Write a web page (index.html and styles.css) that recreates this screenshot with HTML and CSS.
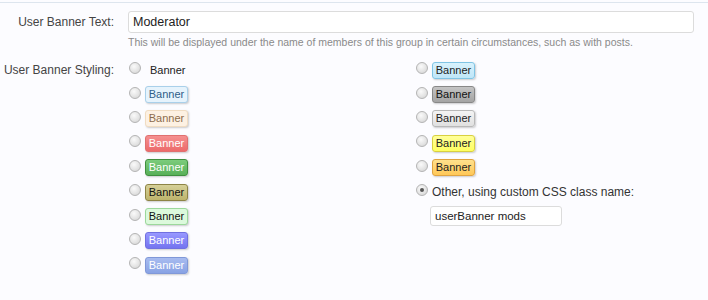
FILE: index.html
```html
<!DOCTYPE html>
<html lang="en">
  <head>
    <meta charset="UTF-8" />
    <title>User Banner</title>
    <link rel="stylesheet" href="styles.css">
  </head>
  <body>
    <div class="panel">
      <div class="ctrl-unit">
        <label class="ctrl-label" for="banner_text">User Banner Text:</label>
        <div class="ctrl-input">
          <input id="banner_text" class="textbox" type="text" value="Moderator" />
          <p class="explain">This will be displayed under the name of members of this group in certain circumstances, such as with posts.</p>
        </div>
      </div>

      <div class="ctrl-unit styling">
        <span class="ctrl-label">User Banner Styling:</span>
        <div class="choices">
          <ul class="choice-col">
            <li><span class="radio"></span><span class="plain">Banner</span></li>
            <li><span class="radio"></span><span class="banner b-lightblue">Banner</span></li>
            <li><span class="radio"></span><span class="banner b-cream">Banner</span></li>
            <li><span class="radio"></span><span class="banner b-red">Banner</span></li>
            <li><span class="radio"></span><span class="banner b-green">Banner</span></li>
            <li><span class="radio"></span><span class="banner b-olive">Banner</span></li>
            <li><span class="radio"></span><span class="banner b-lightgreen">Banner</span></li>
            <li><span class="radio"></span><span class="banner b-royal">Banner</span></li>
            <li><span class="radio"></span><span class="banner b-steel">Banner</span></li>
          </ul>
          <ul class="choice-col">
            <li><span class="radio"></span><span class="banner b-sky">Banner</span></li>
            <li><span class="radio"></span><span class="banner b-gray">Banner</span></li>
            <li><span class="radio"></span><span class="banner b-silver">Banner</span></li>
            <li><span class="radio"></span><span class="banner b-yellow">Banner</span></li>
            <li><span class="radio"></span><span class="banner b-orange">Banner</span></li>
            <li><span class="radio checked"></span><span class="other">Other, using custom CSS class name:</span></li>
            <li class="custom"><input class="textbox small" type="text" value="userBanner mods" /></li>
          </ul>
        </div>
      </div>
    </div>
  </body>
</html>
```

FILE: styles.css
```css
body {
  margin: 0;
  background: #fcfcff;
  font-family: "Liberation Sans", Arial, sans-serif;
  font-size: 12px;
  color: #333;
}
.panel {
  border-top: 1px solid #dde5ee;
  margin-top: 2px;
  padding-top: 8px;
}
.ctrl-unit {
  display: flex;
}
.ctrl-label {
  width: 114px;
  flex: none;
  text-align: right;
  padding-right: 14px;
  color: #444;
  font-size: 12px;
  line-height: 22px;
  white-space: nowrap;
}
.ctrl-input {
  flex: 1;
  padding-right: 14px;
}
.textbox {
  box-sizing: border-box;
  width: 100%;
  height: 22px;
  padding: 0 4px;
  border: 1px solid #dcdcdc;
  border-radius: 3px;
  background: #fff;
  font-family: inherit;
  font-size: 12.5px;
  color: #222;
}
.explain {
  margin: 3px 0 0;
  font-size: 10.5px;
  color: #8a8a8a;
}
.styling {
  margin-top: 14px;
}
.styling .ctrl-label {
  line-height: 16px;
}
.choices {
  display: flex;
}
.choice-col {
  list-style: none;
  margin: 0;
  padding: 0;
  width: 287px;
}
.choice-col li {
  display: flex;
  align-items: center;
  height: 24.4px;
}
.choice-col li:first-child {
  margin-top: -4px;
}
.radio {
  width: 10px;
  height: 10px;
  border-radius: 50%;
  border: 1px solid #b4b4b4;
  background: radial-gradient(circle at 40% 35%, #fafafa 0, #e4e4e4 55%, #cfcfcf 100%);
  margin: 0 4px 0 1px;
  flex: none;
  position: relative;
  top: -2px;
}
.radio.checked::after {
  content: "";
  position: absolute;
  left: 3px;
  top: 3px;
  width: 4px;
  height: 4px;
  border-radius: 50%;
  background: #555;
}
.plain {
  font-size: 11px;
  padding-left: 5px;
  color: #222;
}
.banner {
  box-sizing: border-box;
  width: 43px;
  height: 17px;
  line-height: 15px;
  text-align: center;
  font-size: 11px;
  border: 1px solid;
  border-radius: 3px;
  box-shadow: 1px 1px 2px rgba(0, 0, 0, 0.2);
}
.b-lightblue { background: #e6f3fc; border-color: #a9d0ea; color: #2f5d88; }
.b-cream { background: #fdf1e3; border-color: #f0dcc2; color: #8c6c4c; }
.b-red { background: linear-gradient(#f59090, #ec6a6a); border-color: #e07070; color: #fff; }
.b-green { background: linear-gradient(#7ccc7c, #58b058); border-color: #3f8f3f; color: #fff; }
.b-olive { background: linear-gradient(#d6d098, #bdb46c); border-color: #8d8446; color: #111; }
.b-lightgreen { background: #dcf9dc; border-color: #9cd89c; color: #111; }
.b-royal { background: linear-gradient(#9898ff, #7474f0); border-color: #7070e0; color: #fff; }
.b-steel { background: linear-gradient(#a8bcf0, #88a2e4); border-color: #8098d8; color: #fff; }
.b-sky { background: linear-gradient(#d8f2fd, #bfe6f8); border-color: #80c4e4; color: #222; }
.b-gray { background: linear-gradient(#c4c4c4, #a4a4a4); border-color: #888; color: #111; }
.b-silver { background: linear-gradient(#f4f4f4, #e0e0e0); border-color: #b8b8b8; color: #222; }
.b-yellow { background: linear-gradient(#ffff9a, #ffff60); border-color: #d8d040; color: #222; }
.b-orange { background: linear-gradient(#ffe08c, #ffc858); border-color: #e0a440; color: #222; }
.other {
  font-size: 12px;
  color: #333;
}
.choice-col li.custom {
  padding-left: 15px;
  height: 28px;
  margin-top: -2px;
}
.textbox.small {
  width: 132px;
  height: 20px;
  font-size: 11.5px;
}
```
